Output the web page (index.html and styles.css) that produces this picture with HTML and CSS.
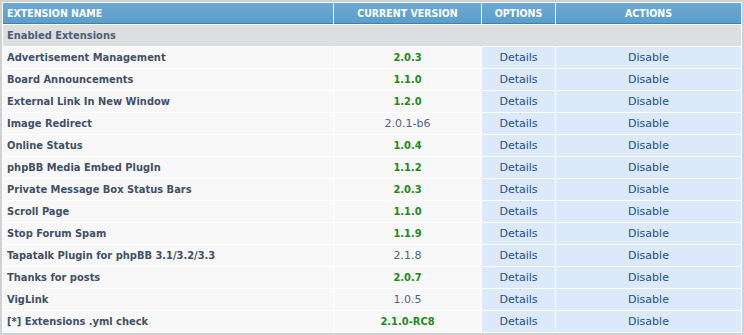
FILE: index.html
```html
<!DOCTYPE html>
<html>
<head>
<meta charset="utf-8">
<link rel="stylesheet" href="styles.css">
</head>
<body>
<div class="panel">
<table class="ext">
<colgroup>
<col class="c-name"><col class="c-ver"><col class="c-opt"><col class="c-act">
</colgroup>
<thead>
<tr><th class="left">Extension Name</th><th>Current Version</th><th>Options</th><th>Actions</th></tr>
</thead>
<tbody>
<tr class="cat"><td colspan="4">Enabled Extensions</td></tr>
<tr><td class="name">Advertisement Management</td><td class="ver ok">2.0.3</td><td class="opt"><a href="#">Details</a></td><td class="opt"><a href="#">Disable</a></td></tr>
<tr><td class="name">Board Announcements</td><td class="ver ok">1.1.0</td><td class="opt"><a href="#">Details</a></td><td class="opt"><a href="#">Disable</a></td></tr>
<tr><td class="name">External Link In New Window</td><td class="ver ok">1.2.0</td><td class="opt"><a href="#">Details</a></td><td class="opt"><a href="#">Disable</a></td></tr>
<tr><td class="name">Image Redirect</td><td class="ver">2.0.1-b6</td><td class="opt"><a href="#">Details</a></td><td class="opt"><a href="#">Disable</a></td></tr>
<tr><td class="name">Online Status</td><td class="ver ok">1.0.4</td><td class="opt"><a href="#">Details</a></td><td class="opt"><a href="#">Disable</a></td></tr>
<tr><td class="name">phpBB Media Embed PlugIn</td><td class="ver ok">1.1.2</td><td class="opt"><a href="#">Details</a></td><td class="opt"><a href="#">Disable</a></td></tr>
<tr><td class="name">Private Message Box Status Bars</td><td class="ver ok">2.0.3</td><td class="opt"><a href="#">Details</a></td><td class="opt"><a href="#">Disable</a></td></tr>
<tr><td class="name">Scroll Page</td><td class="ver ok">1.1.0</td><td class="opt"><a href="#">Details</a></td><td class="opt"><a href="#">Disable</a></td></tr>
<tr><td class="name">Stop Forum Spam</td><td class="ver ok">1.1.9</td><td class="opt"><a href="#">Details</a></td><td class="opt"><a href="#">Disable</a></td></tr>
<tr><td class="name">Tapatalk Plugin for phpBB 3.1/3.2/3.3</td><td class="ver">2.1.8</td><td class="opt"><a href="#">Details</a></td><td class="opt"><a href="#">Disable</a></td></tr>
<tr><td class="name">Thanks for posts</td><td class="ver ok">2.0.7</td><td class="opt"><a href="#">Details</a></td><td class="opt"><a href="#">Disable</a></td></tr>
<tr><td class="name">VigLink</td><td class="ver">1.0.5</td><td class="opt"><a href="#">Details</a></td><td class="opt"><a href="#">Disable</a></td></tr>
<tr><td class="name">[*] Extensions .yml check</td><td class="ver ok">2.1.0-RC8</td><td class="opt"><a href="#">Details</a></td><td class="opt"><a href="#">Disable</a></td></tr>
</tbody>
</table>
</div>
</body>
</html>
```

FILE: styles.css
```css
html, body {
  margin: 0;
  padding: 0;
  background: #ffffff;
}
body {
  font-family: "DejaVu Sans", Verdana, sans-serif;
  font-size: 11px;
}
.panel {
  border-top: 2px solid #cfd1d3;
  border-left: 2px solid #cfd1d3;
  border-right: 2px solid #cfd1d3;
  border-bottom: 3px solid #cfd1d3;
  background: #ffffff;
}
.ext {
  width: 100%;
  border-collapse: separate;
  border-spacing: 1px;
  table-layout: fixed;
}
.c-name { width: 330px; }
.c-ver { width: 147px; }
.c-opt { width: 73px; }
.c-act { width: auto; }
.ext th {
  height: 20px;
  padding: 0 4px;
  background: linear-gradient(#6daad5, #5b9dcb);
  border-bottom: 1px solid #3d7fb2;
  color: #ffffff;
  font-family: "DejaVu Sans Condensed", "DejaVu Sans", sans-serif;
  font-weight: bold;
  font-size: 10.5px;
  text-transform: uppercase;
  text-align: center;
}
.ext th.left { text-align: left; }
.ext td {
  height: 21px;
  padding: 0 4px;
  background: #f8f8f8;
  color: #425067;
  text-align: center;
  white-space: nowrap;
}
.ext tr.cat td {
  background: #dcdee0;
  text-align: left;
  font-family: "DejaVu Sans Condensed", "DejaVu Sans", sans-serif;
  font-weight: bold;
  color: #4c5d77;
}
.ext td.name {
  text-align: left;
  font-family: "DejaVu Sans Condensed", "DejaVu Sans", sans-serif;
  font-weight: bold;
  color: #425067;
}
.ext td.ver { color: #536482; }
.ext td.ver.ok {
  color: #228822;
  font-family: "DejaVu Sans Condensed", "DejaVu Sans", sans-serif;
  font-weight: bold;
}
.ext td.opt { background: #dce9fa; }
.ext td.opt a {
  color: #1e4f86;
  text-decoration: none;
}
```
